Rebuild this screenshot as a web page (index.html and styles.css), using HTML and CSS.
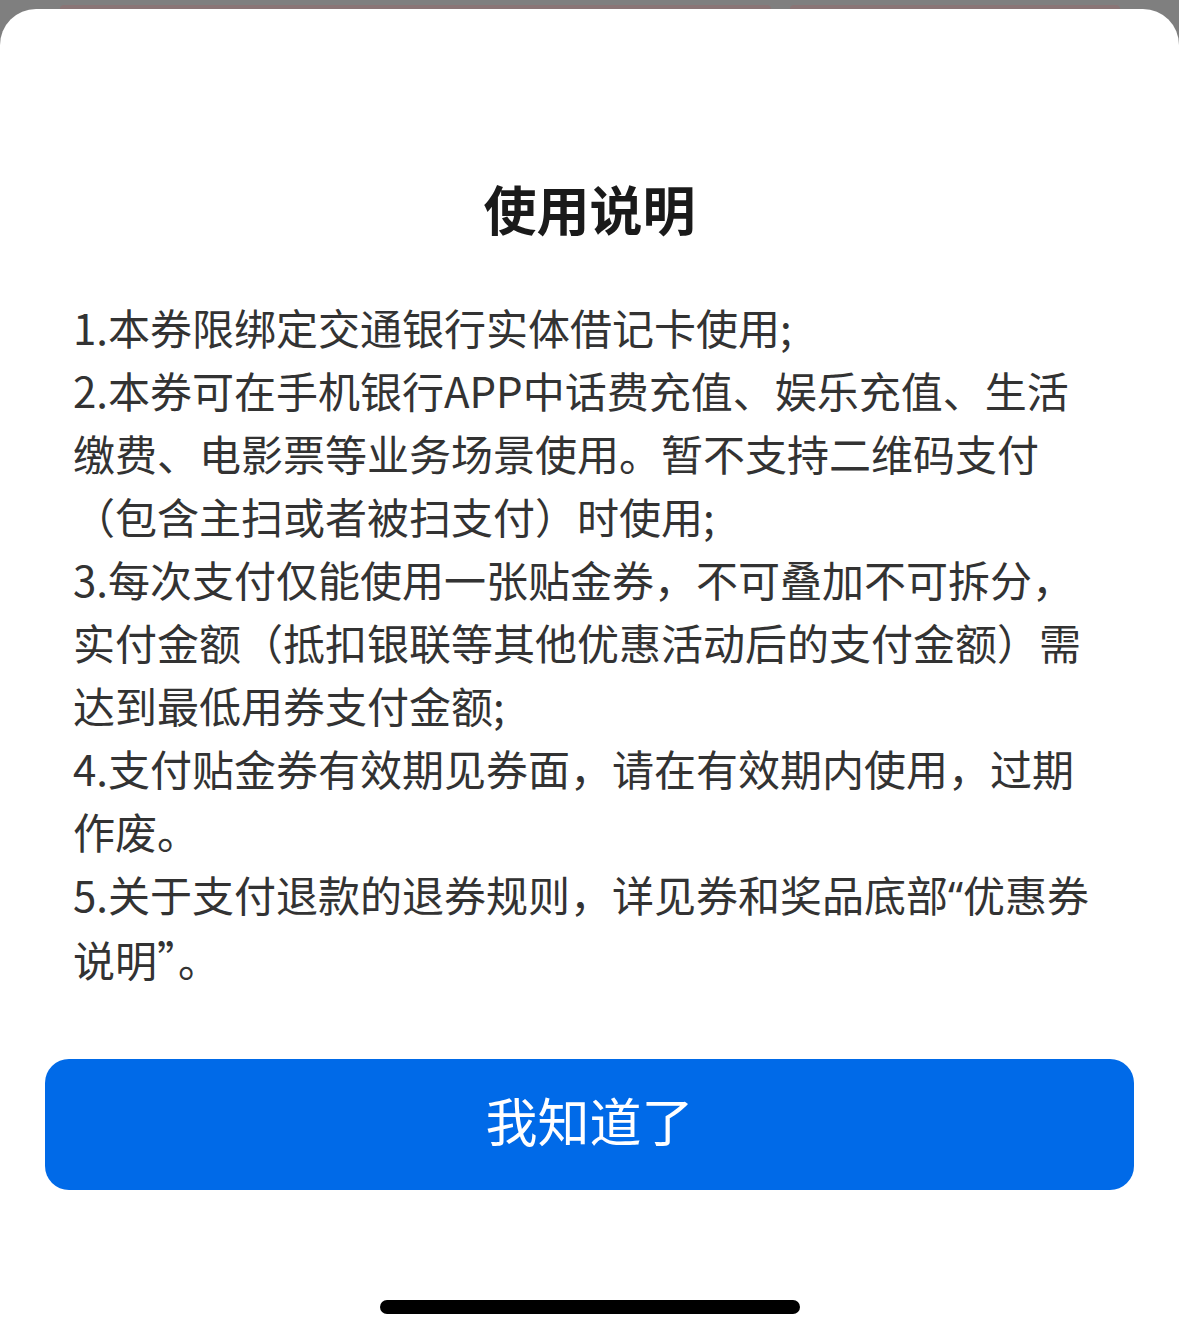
FILE: index.html
```html
<!DOCTYPE html>
<html lang="zh-CN">
<head>
<meta charset="utf-8">
<link rel="stylesheet" href="styles.css">
</head>
<body>
<div class="backdrop">
  <div class="back-card back-card-a"></div>
  <div class="back-card back-card-b"></div>
</div>
<div class="sheet">
  <h1 class="title">使用说明</h1>
  <div class="rules">
    <p class="rule">1.本券限绑定交通银行实体借记卡使用;</p>
    <p class="rule">2.本券可在手机银行APP中话费充值、娱乐充值、生活<br>缴费、电影票等业务场景使用。暂不支持二维码支付<br>（包含主扫或者被扫支付）时使用;</p>
    <p class="rule">3.每次支付仅能使用一张贴金券，不可叠加不可拆分，<br>实付金额（抵扣银联等其他优惠活动后的支付金额）需<br>达到最低用券支付金额;</p>
    <p class="rule">4.支付贴金券有效期见券面，请在有效期内使用，过期<br>作废。</p>
    <p class="rule">5.关于支付退款的退券规则，详见券和奖品底部<span class="quote">“</span>优惠券<br>说明”。</p>
  </div>
  <button class="confirm">我知道了</button>
  <div class="home-bar"></div>
</div>
</body>
</html>
```
FILE: styles.css
```css
html, body {
  margin: 0;
  padding: 0;
}
body {
  width: 1179px;
  height: 1338px;
  overflow: hidden;
  background: #7f7f7f;
  font-family: "Noto Sans CJK SC", "Noto Sans", sans-serif;
}
.backdrop {
  display: flex;
  gap: 19px;
  padding: 5px 59px 0 60px;
  height: 4px;
}
.back-card {
  height: 4px;
  background: #8a7576;
  border-radius: 4px 4px 0 0;
}
.back-card-a { width: 711px; }
.back-card-b { width: 330px; }
.sheet {
  background: #ffffff;
  border-radius: 36px 36px 0 0;
  height: 1329px;
  display: flex;
  flex-direction: column;
  align-items: center;
}
.title {
  margin: 164px 0 0;
  font-size: 53px;
  line-height: 70px;
  font-weight: 700;
  color: #1a1a1a;
  text-align: center;
}
.rules {
  align-self: stretch;
  padding: 0 60px 0 73px;
  margin-top: 52px;
}
.rule {
  margin: 0;
  font-size: 42px;
  line-height: 63px;
  color: #333333;
  white-space: nowrap;
}
.quote {
  font-family: "Noto Sans", sans-serif;
}
.confirm {
  align-self: stretch;
  margin: 69px 45px 0;
  height: 131px;
  border: none;
  border-radius: 24px;
  background: #006ae8;
  color: #ffffff;
  font-family: "Noto Sans CJK SC", "Noto Sans", sans-serif;
  font-size: 52px;
  line-height: 60px;
  font-weight: 400;
  padding: 0 0 10px;
}
.home-bar {
  margin-top: 110px;
  width: 420px;
  height: 14px;
  border-radius: 7px;
  background: #000000;
}
```
